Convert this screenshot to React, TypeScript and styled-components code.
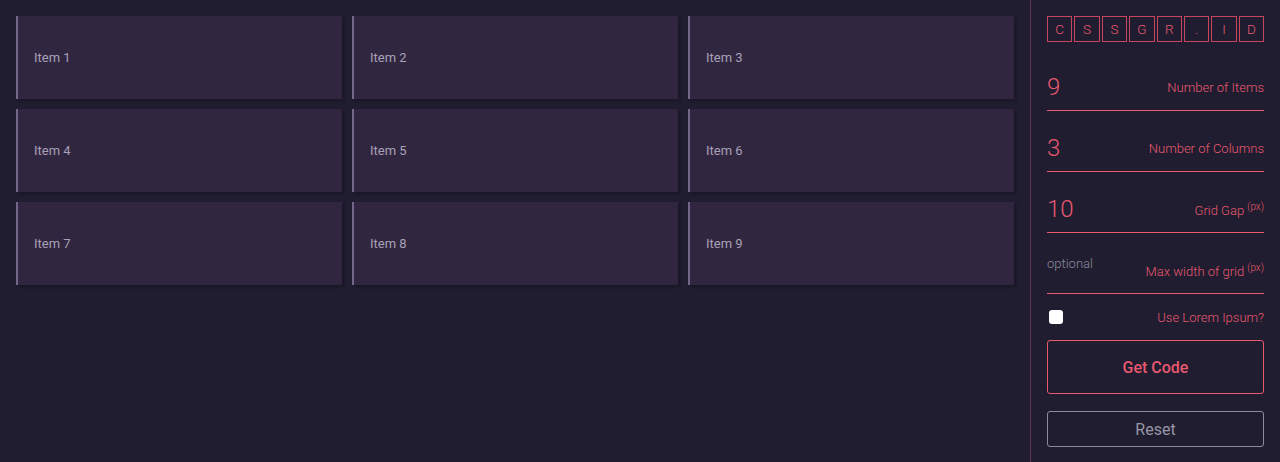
import React from "react";
import styled, { createGlobalStyle } from "styled-components";

const Global = createGlobalStyle`
  html, body { margin: 0; padding: 0; background: #1f1d2f; }
  body { font-family: Roboto, "Liberation Sans", sans-serif; }
  * { box-sizing: border-box; }
`;

const PINK = "#e8586f";

const Layout = styled.div`
  display: flex;
  width: 1280px;
  height: 462px;
  background: #1f1d2f;
  overflow: hidden;
`;

const Main = styled.main`
  width: 1030px;
  padding: 16px;
`;

const Grid = styled.div`
  display: grid;
  grid-template-columns: repeat(3, 1fr);
  gap: 10px;
`;

const Item = styled.div`
  height: 83px;
  background: #31263f;
  border-left: 2px solid #736889;
  box-shadow: 2px 2px 3px rgba(10, 8, 20, 0.3);
  display: flex;
  align-items: center;
  padding-left: 16px;
  color: #a8a0b8;
  font-size: 13px;
  font-weight: 400;
`;

const Sidebar = styled.aside`
  width: 250px;
  border-left: 1px solid #5d3453;
  padding: 16px 16px 0 16px;
  display: flex;
  flex-direction: column;
`;

const Logo = styled.div`
  display: flex;
  gap: 2px;
  height: 26px;
`;

const LogoBox = styled.span`
  flex: 1;
  border: 1px solid #c9445e;
  display: flex;
  align-items: center;
  justify-content: center;
  color: ${PINK};
  font-size: 13.5px;
  font-weight: 300;
`;

const Field = styled.div<{ first?: boolean }>`
  height: 47px;
  margin-top: ${(p) => (p.first ? "22px" : "14px")};
  border-bottom: 1px solid ${PINK};
  display: flex;
  align-items: center;
  justify-content: space-between;
`;

const Value = styled.span`
  color: ${PINK};
  font-size: 24px;
  font-weight: 300;
`;

const Placeholder = styled.span`
  color: #8e8a9c;
  font-size: 13px;
  font-weight: 300;
  margin-top: -14px;
`;

const Label = styled.label`
  color: ${PINK};
  font-size: 13px;
  font-weight: 300;
  sup {
    font-size: 10px;
    vertical-align: 5px;
    margin-left: 3px;
  }
`;

const CheckRow = styled.div`
  margin-top: 13px;
  height: 20px;
  display: flex;
  align-items: center;
  justify-content: space-between;
`;

const Check = styled.span`
  width: 14px;
  height: 14px;
  margin-left: 2px;
  background: #ffffff;
  border-radius: 3px;
`;

const Button = styled.button<{ primary?: boolean }>`
  margin-top: ${(p) => (p.primary ? "13px" : "17px")};
  height: ${(p) => (p.primary ? "54px" : "36px")};
  width: 100%;
  background: transparent;
  border: 1px solid ${(p) => (p.primary ? PINK : "#8d8b9b")};
  border-radius: 3px;
  color: ${(p) => (p.primary ? PINK : "#9896a6")};
  font-family: Roboto, "Liberation Sans", sans-serif;
  font-size: 16px;
  font-weight: ${(p) => (p.primary ? 500 : 400)};
`;

export default function App() {
  const items = Array.from({ length: 9 }, (_, i) => `Item ${i + 1}`);
  const logo = ["C", "S", "S", "G", "R", ".", "I", "D"];
  return (
    <Layout>
      <Global />
      <Main>
        <Grid>
          {items.map((t) => (
            <Item key={t}>{t}</Item>
          ))}
        </Grid>
      </Main>
      <Sidebar>
        <Logo>
          {logo.map((l, i) => (
            <LogoBox key={i}>{l}</LogoBox>
          ))}
        </Logo>
        <Field first>
          <Value>9</Value>
          <Label>Number of Items</Label>
        </Field>
        <Field>
          <Value>3</Value>
          <Label>Number of Columns</Label>
        </Field>
        <Field>
          <Value>10</Value>
          <Label>
            Grid Gap<sup>(px)</sup>
          </Label>
        </Field>
        <Field>
          <Placeholder>optional</Placeholder>
          <Label>
            Max width of grid<sup>(px)</sup>
          </Label>
        </Field>
        <CheckRow>
          <Check />
          <Label>Use Lorem Ipsum?</Label>
        </CheckRow>
        <Button primary>Get Code</Button>
        <Button>Reset</Button>
      </Sidebar>
    </Layout>
  );
}
